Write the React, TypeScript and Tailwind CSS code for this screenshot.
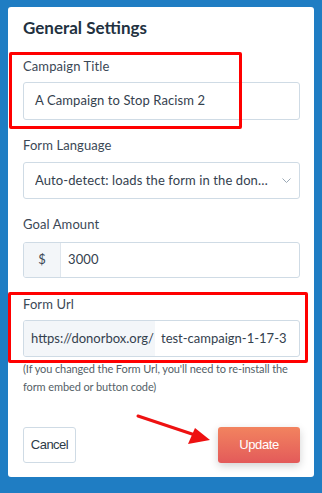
import React from 'react';

const font = { fontFamily: 'Lato, "Open Sans", sans-serif' };
const btnFont = { fontFamily: '"Liberation Sans", Arial, sans-serif' };

function Label({ children, className = '' }: { children: React.ReactNode; className?: string }) {
  return (
    <div className={`h-[20px] leading-[20px] text-[13px] tracking-[0.1px] text-[#3b4856] ${className}`}>{children}</div>
  );
}

export default function App() {
  return (
    <div className="w-[322px] h-[493px] bg-[#1f7dc3] pt-[7px] px-[8px]" style={font}>
      <div className="relative w-[306px] h-[470px] bg-white rounded-[3px] pt-[9px] pl-[15px] pr-[14px] flex flex-col">
        {/* 标题 */}
        <h2 className="h-[24px] leading-[24px] text-[17px] font-bold text-[#22313f]">
          General Settings
        </h2>

        {/* Campaign Title */}
        <Label className="mt-[16px]">Campaign Title</Label>
        <div className="mt-[6px] h-[38px] border border-[#cfdbe5] rounded-[3px] flex items-center px-[11px] text-[13px] tracking-[0.1px] text-[#34414e]">
          A Campaign to Stop Racism 2
        </div>

        {/* Form Language */}
        <Label className="mt-[15px]">Form Language</Label>
        <div className="mt-[7px] h-[37px] border border-[#cfdbe5] rounded-[3px] flex items-center pl-[11px] pr-[8px] text-[13px] tracking-[0.1px] text-[#34414e]">
          <span className="flex-1 truncate">Auto-detect: loads the form in the donor's language</span>
          <svg width="9" height="5" viewBox="0 0 9 5" className="ml-[8px]">
            <path d="M0.5 0.5l4 4 4-4" fill="none" stroke="#9aa8b5" strokeWidth="1" />
          </svg>
        </div>

        {/* Goal Amount */}
        <Label className="mt-[15px]">Goal Amount</Label>
        <div className="mt-[8px] h-[36px] border border-[#cfdbe5] rounded-[3px] flex text-[13px] tracking-[0.1px] text-[#34414e] overflow-hidden">
          <div className="w-[37px] bg-[#f3f6f9] border-r border-[#dfe6ed] flex items-center justify-center text-[#3b4856]">$</div>
          <div className="flex items-center pl-[7px]">3000</div>
        </div>

        {/* Form Url */}
        <Label className="mt-[16px]">Form Url</Label>
        <div className="mt-[6px] h-[37px] border border-[#cfdbe5] rounded-[3px] flex text-[13px] text-[#34414e] overflow-hidden">
          <div className="w-[131px] bg-[#f3f6f9] flex items-center pl-[7px] whitespace-nowrap">https://donorbox.org/</div>
          <div className="flex items-center pl-[6px] whitespace-nowrap">test-campaign-1-17-3</div>
        </div>

        <p className="mt-[3px] -mr-[4px] text-[11px] leading-[18px] tracking-[-0.1px] text-[#555f68]">
          (If you changed the Form Url, you'll need to re-install the form embed or button code)
        </p>

        {/* 按钮 */}
        <div className="mt-[31px] flex justify-between">
          <button
            className="h-[36px] w-[53px] border border-[#cfdbe5] rounded-[3px] text-[13px] tracking-[-0.5px] text-[#2d3b48] bg-white"
            style={btnFont}
          >
            Cancel
          </button>
          <button
            className="h-[36px] w-[82px] rounded-[3px] text-[13px] tracking-[-0.4px] text-white bg-gradient-to-b from-[#f2835f] to-[#e35a5a] shadow-[0_3px_8px_rgba(0,0,0,0.18)]"
            style={btnFont}
          >
            Update
          </button>
        </div>

        {/* 标注框 */}
        <div className="absolute left-[1px] top-[45px] w-[233px] h-[77px] border-[3px] border-[#ff0000] rounded-[2px] pointer-events-none" />
        <div className="absolute left-0 top-[285px] w-[300px] h-[71px] border-[3px] border-[#ff0000] rounded-[2px] pointer-events-none" />

        {/* 箭头 */}
        <svg className="absolute left-[125px] top-[403px] pointer-events-none" width="80" height="40" viewBox="0 0 80 40">
          <line x1="5" y1="6" x2="62" y2="25" stroke="#ee1111" strokeWidth="3" strokeLinecap="round" />
          <polygon points="77,30 55,34 62,18" fill="#ee1111" />
        </svg>
      </div>
    </div>
  );
}
